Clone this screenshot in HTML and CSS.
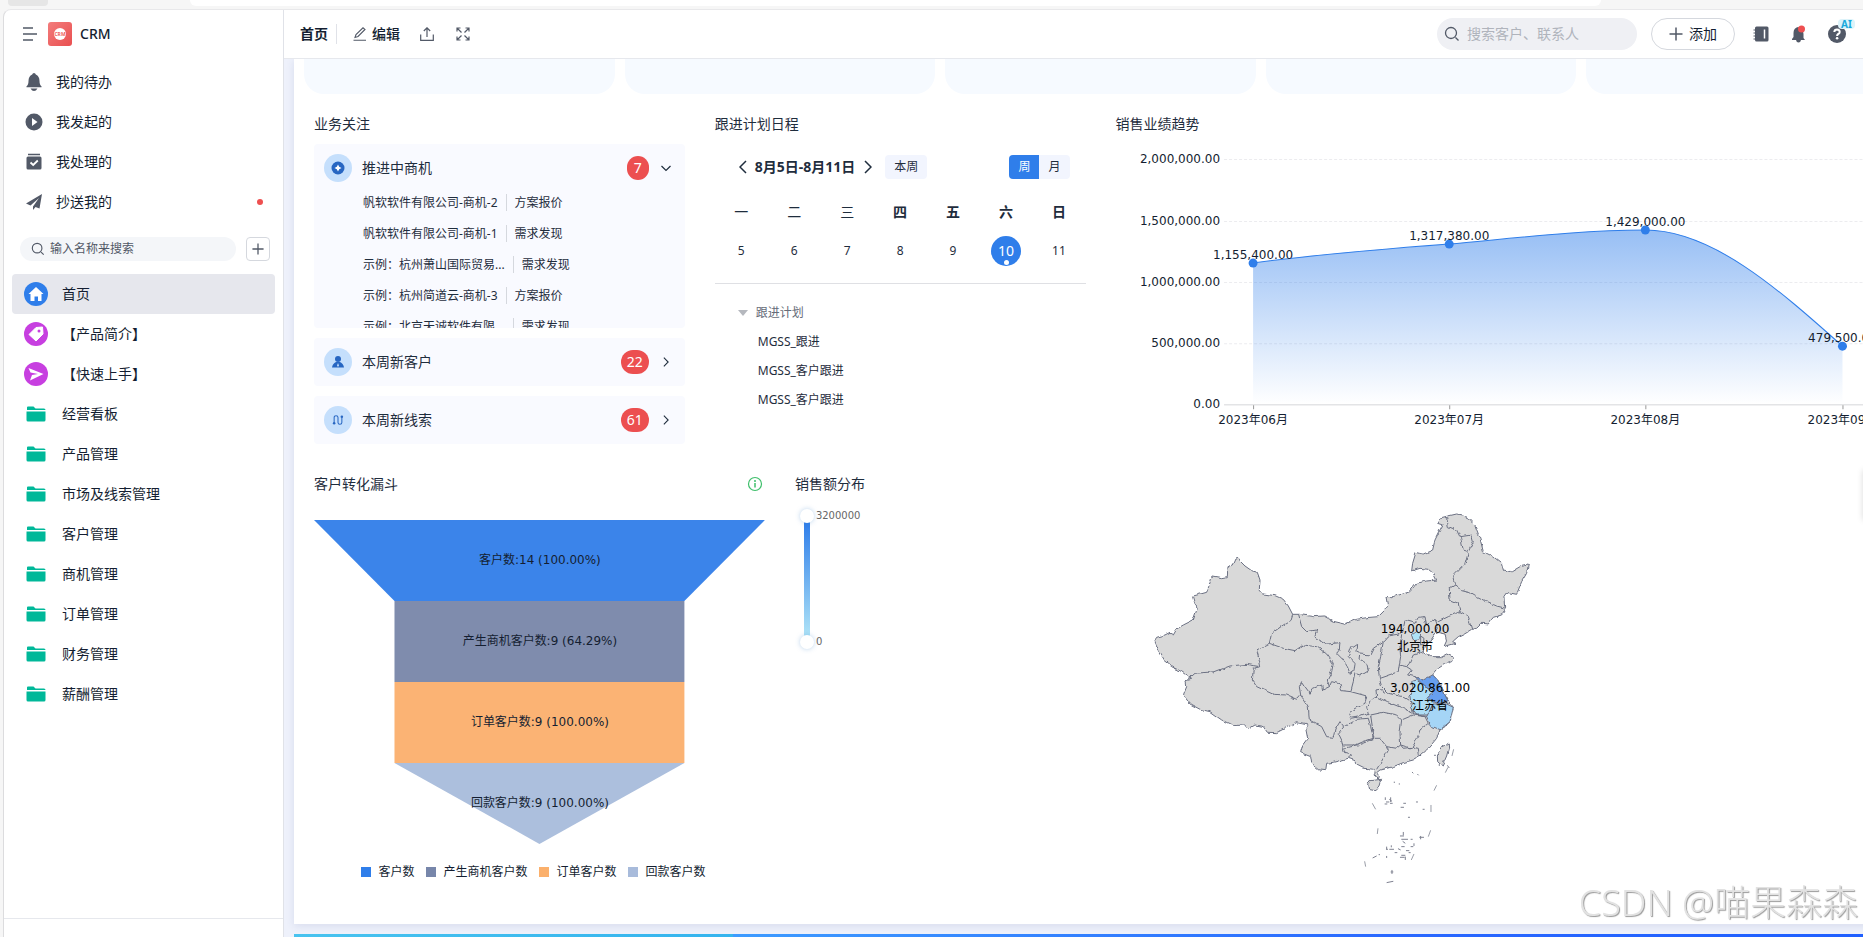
FILE: index.html
```html
<!DOCTYPE html>
<html lang="zh-CN">
<head>
  <meta charset="UTF-8" />
  <title>CRM</title>
  <meta name="viewport" content="width=device-width, initial-scale=1.0" />
  <link rel="stylesheet" href="styles.css">
</head>
<body>

  <!-- icons used more than once -->
  <svg class="sprite" aria-hidden="true">
    <symbol id="folder" viewBox="0 0 20 16">
      <path d="M1 4V1.500Q1 .5 2 .5H7.500L9.500 2.500H18Q19.500 2.500 19.500 4Z" fill="#00b899"/>
      <path d="M.5 5.500H19.500V14Q19.500 15.500 18 15.500H2Q.5 15.500 .5 14Z" fill="#00b899"/>
    </symbol>
    <symbol id="search" viewBox="0 0 16 16">
      <path d="M7 1.500a5.500 5.500 0 1 0 0 11a5.500 5.500 0 1 0 0-11M11.500 11.500l3 3" fill="none" stroke="#525967" stroke-width="1.300"/>
    </symbol>
    <symbol id="plus" viewBox="0 0 14 14">
      <path d="M7 .5v13M.5 7h13" stroke="#525967" stroke-width="1.500"/>
    </symbol>
    <symbol id="right" viewBox="0 0 8 14">
      <path d="M1 1l6 6l-6 6" fill="none" stroke="#1f2d3d" stroke-width="1.500"/>
    </symbol>
  </svg>

  <div class="browser-bar"><span class="tab"></span><span class="address"></span></div>

  <div class="app">
    <aside class="sidebar">
      <div class="brand">
        <button class="icon-btn" aria-label="收起菜单">
          <svg width="14" height="14" viewBox="0 0 14 14"><path d="M0 1h10M0 7h14M0 13h10" stroke="#525967" stroke-width="1.500"/></svg>
        </button>
        <span class="logo">
          <svg width="24" height="24" viewBox="0 0 24 24"><circle cx="12" cy="12" r="6" fill="#fff"/><text x="12" y="14" class="logo-text">CRM</text></svg>
        </span>
        <span class="brand-name">CRM</span>
      </div>

      <nav class="quick">
        <a href="#">
          <svg width="18" height="18" viewBox="0 0 18 18"><path d="M9 0Q10.500 0 10.800 1.500Q14.500 3 14.500 8Q14.500 12 16.500 13.200V14.200H1.500V13.200Q3.500 12 3.500 8Q3.500 3 7.200 1.500Q7.500 0 9 0ZM5.500 15.500H12.500Q11 18 9 18Q7 18 5.500 15.500Z" fill="#525967"/></svg>
          我的待办
        </a>
        <a href="#">
          <svg width="18" height="18" viewBox="0 0 18 18"><circle cx="9" cy="9" r="8.500" fill="#525967"/><path d="M7 5L12.500 9L7 13Z" fill="#fff"/></svg>
          我发起的
        </a>
        <a href="#">
          <svg width="18" height="18" viewBox="0 0 18 18"><path d="M3 1.500H15" stroke="#525967" stroke-width="1.500"/><rect x="1.500" y="3.500" width="15" height="13" rx="1.500" fill="#525967"/><path d="M5.500 9.500L8.200 12L12.800 7.500" fill="none" stroke="#fff" stroke-width="1.800"/></svg>
          我处理的
        </a>
        <a href="#">
          <svg width="18" height="18" viewBox="0 0 18 18"><path d="M17 1L1 10.500L5.500 12.500L14 5L8 13.500V17L10.500 14L14.500 15.500Z" fill="#525967"/></svg>
          抄送我的
          <span class="dot"></span>
        </a>
      </nav>

      <div class="menu-search">
        <label class="pill">
          <svg width="14" height="14"><use href="#search"/></svg>
          <input type="text" placeholder="输入名称来搜索" aria-label="输入名称来搜索" />
        </label>
        <button class="add-menu" aria-label="新建"><svg width="12" height="12"><use href="#plus"/></svg></button>
      </div>

      <nav class="menu">
        <a href="#" class="active">
          <svg width="24" height="24" viewBox="0 0 24 24"><circle cx="12" cy="12" r="12" fill="#2f7eea"/><path d="M12 5L19.500 12H17.500V19H14V14.500H10.500V19H6.500V12H4.500Z" fill="#fff"/></svg>
          首页
        </a>
        <a href="#">
          <svg width="24" height="24" viewBox="0 0 24 24"><circle cx="12" cy="12" r="12" fill="#c73fe0"/><path d="M5 12.500L12 5.500L18.500 5L19 12L12 19Z" fill="#fff" stroke="#fff" stroke-linejoin="round"/><circle cx="15" cy="9" r="1.500" fill="#c73fe0"/></svg>
          【产品简介】
        </a>
        <a href="#">
          <svg width="24" height="24" viewBox="0 0 24 24"><circle cx="12" cy="12" r="12" fill="#c73fe0"/><path d="M4.500 6L19.500 12L6 18.500L8 13L14 12L6.500 10.500Z" fill="#fff"/></svg>
          【快速上手】
        </a>
        <a href="#"><svg width="24" height="16"><use href="#folder"/></svg>经营看板</a>
        <a href="#"><svg width="24" height="16"><use href="#folder"/></svg>产品管理</a>
        <a href="#"><svg width="24" height="16"><use href="#folder"/></svg>市场及线索管理</a>
        <a href="#"><svg width="24" height="16"><use href="#folder"/></svg>客户管理</a>
        <a href="#"><svg width="24" height="16"><use href="#folder"/></svg>商机管理</a>
        <a href="#"><svg width="24" height="16"><use href="#folder"/></svg>订单管理</a>
        <a href="#"><svg width="24" height="16"><use href="#folder"/></svg>财务管理</a>
        <a href="#"><svg width="24" height="16"><use href="#folder"/></svg>薪酬管理</a>
      </nav>
      <div class="sidebar-foot"></div>
    </aside>

    <div class="page">
      <header class="topbar">
        <h1>首页</h1>
        <button class="tool edit">
          <svg width="14" height="14" viewBox="0 0 14 14"><path d="M2 10.500L3 7.500L10 .8L12 2.500L5 9.500ZM.5 13.300H13" fill="none" stroke="#525967" stroke-width="1.100"/></svg>
          编辑
        </button>
        <button class="tool" aria-label="分享">
          <svg width="14" height="14" viewBox="0 0 14 14"><path d="M.7 7.500V13.300H13.300V7.500M7 10V1M3.800 4L7 .8L10.200 4" fill="none" stroke="#525967" stroke-width="1.200"/></svg>
        </button>
        <button class="tool" aria-label="全屏">
          <svg width="14" height="14" viewBox="0 0 14 14"><path d="M1 4.500V1H4.500M1 1L5.500 5.500M9.500 1H13V4.500M13 1L8.500 5.500M1 9.500V13H4.500M1 13L5.500 8.500M13 9.500V13H9.500M13 13L8.500 8.500" fill="none" stroke="#525967" stroke-width="1.200"/></svg>
        </button>

        <label class="global-search">
          <svg width="16" height="16"><use href="#search"/></svg>
          <input type="text" placeholder="搜索客户、联系人" aria-label="搜索客户、联系人" />
        </label>
        <button class="add-btn"><svg width="14" height="14"><use href="#plus"/></svg>添加</button>
        <button class="icon-btn" aria-label="通讯录">
          <svg width="18" height="18" viewBox="0 0 18 18"><rect x="3" y="1.500" width="13.500" height="15" rx="1.500" fill="#525967"/><path d="M12.500 4.500V13.500" stroke="#fff" stroke-width="1.500"/><path d="M1.500 5H4M1.500 8H4M1.500 11H4M1.500 14H4" stroke="#525967"/></svg>
        </button>
        <button class="icon-btn" aria-label="消息">
          <svg width="18" height="18" viewBox="0 0 18 18"><path d="M8 2Q13.500 3 13.500 9V13L15 15H2V14L3.500 12V8Q3.500 3 8 2ZM6 15H11Q10.500 17.500 8.500 17.500Q6.500 17.500 6 15Z" fill="#525967"/><circle cx="11.500" cy="4" r="3.500" fill="#ee4f50"/></svg>
        </button>
        <button class="icon-btn help" aria-label="帮助">
          <svg width="18" height="18" viewBox="0 0 18 18"><circle cx="9" cy="9" r="9" fill="#525967"/><path d="M6.300 7Q6.500 4.500 9 4.500Q11.700 4.600 11.700 6.900Q11.700 8.200 10.200 9Q9.100 9.600 9.100 11" fill="none" stroke="#fff" stroke-width="2"/><circle cx="9.100" cy="13.300" r="1.300" fill="#fff"/></svg>
          <span class="ai">AI</span>
        </button>
      </header>

      <main class="content">
        <div class="board">
          <div class="cards">
            <div class="card"></div><div class="card"></div><div class="card"></div><div class="card"></div><div class="card"></div>
          </div>

          <div class="row first">
            <section class="widget">
              <h2>业务关注</h2>
              <div class="focus open">
                <div class="focus-head">
                  <span class="focus-icon"><svg width="14" height="14" viewBox="0 0 14 14"><circle cx="7" cy="7" r="6.500" fill="#2766c2"/><path d="M7 3.500L8.200 5.800L10.500 7L8.200 8.200L7 10.500L5.800 8.200L3.500 7L5.800 5.800Z" fill="#fff"/></svg></span>
                  <span class="focus-name">推进中商机</span>
                  <span class="badge">7</span>
                  <svg width="12" height="12" viewBox="0 0 12 12"><path d="M1.500 4L6 8.500L10.500 4" fill="none" stroke="#1f2d3d" stroke-width="1.200"/></svg>
                </div>
                <ul>
                  <li><span class="name">帆软软件有限公司-商机-2</span><span class="stage">方案报价</span></li>
                  <li><span class="name">帆软软件有限公司-商机-1</span><span class="stage">需求发现</span></li>
                  <li><span class="name">示例：杭州萧山国际贸易...</span><span class="stage">需求发现</span></li>
                  <li><span class="name">示例：杭州简道云-商机-3</span><span class="stage">方案报价</span></li>
                  <li><span class="name">示例：北京天诚软件有限...</span><span class="stage">需求发现</span></li>
                </ul>
              </div>
              <div class="focus">
                <div class="focus-head">
                  <span class="focus-icon"><svg width="14" height="14" viewBox="0 0 14 14"><circle cx="7" cy="4" r="3" fill="#2766c2"/><path d="M1 12.500Q1.500 8.500 5 7H9Q12.500 8.500 13 12.500Z" fill="#2766c2"/><path d="M7 8L8 10.500L7 12L6 10.500Z" fill="#c5dffc"/></svg></span>
                  <span class="focus-name">本周新客户</span>
                  <span class="badge">22</span>
                  <svg width="12" height="10"><use href="#right"/></svg>
                </div>
              </div>
              <div class="focus">
                <div class="focus-head">
                  <span class="focus-icon"><svg width="12" height="12" viewBox="0 0 14 14"><path d="M2.500 10V4Q2.500 2 4.700 2Q7 2 7 4V10Q7 12 9.200 12Q11.500 12 11.500 10V4" fill="none" stroke="#2766c2" stroke-width="1.200"/><circle cx="2.500" cy="10.800" r="1.500" fill="#2766c2"/><circle cx="11.500" cy="3.200" r="1.500" fill="#2766c2"/></svg></span>
                  <span class="focus-name">本周新线索</span>
                  <span class="badge">61</span>
                  <svg width="12" height="10"><use href="#right"/></svg>
                </div>
              </div>
            </section>

            <section class="widget">
              <h2>跟进计划日程</h2>
              <div class="cal-bar">
                <button class="arrow" aria-label="上一周"><svg width="8" height="14" viewBox="0 0 8 14"><path d="M7 1l-6 6l6 6" fill="none" stroke="#1f2d3d" stroke-width="1.500"/></svg></button>
                <strong>8月5日-8月11日</strong>
                <button class="arrow" aria-label="下一周"><svg width="8" height="14"><use href="#right"/></svg></button>
                <button class="this-week">本周</button>
                <div class="switch"><button class="on">周</button><button>月</button></div>
              </div>
              <table class="cal">
                <thead>
                  <tr><th class="thin">一</th><th class="thin">二</th><th class="thin">三</th><th>四</th><th>五</th><th>六</th><th>日</th></tr>
                </thead>
                <tbody>
                  <tr><td>5</td><td>6</td><td>7</td><td>8</td><td>9</td><td><span class="today">10</span></td><td>11</td></tr>
                </tbody>
              </table>
              <div class="plan">
                <div class="plan-head"><span class="caret"></span>跟进计划</div>
                <ul>
                  <li>MGSS_跟进</li>
                  <li>MGSS_客户跟进</li>
                  <li>MGSS_客户跟进</li>
                </ul>
              </div>
            </section>

            <section class="widget">
              <h2>销售业绩趋势</h2>
              <svg class="trend" viewBox="0 0 771 290">
                <defs>
                  <linearGradient id="area" x1="0" y1="0" x2="0" y2="1">
                    <stop offset="0" stop-color="#2f7eea" stop-opacity=".5"/>
                    <stop offset="1" stop-color="#2f7eea" stop-opacity="0"/>
                  </linearGradient>
                </defs>
                <path class="grid" d="M108 15.500H771M108 77.500H771M108 138.500H771M108 199.500H771"/>
                <path d="M108 260.500H771" stroke="#e3e4e6" stroke-width="1.500"/>
                <path d="M137.500 261v4M333.500 261v4M529.500 261v4M726.500 261v4" stroke="#999"/>
                <path d="M137 119C202 110 268 105 333 100C399 94 464 86 529 86C595 86 661 144 726 202V260H137Z" fill="url(#area)"/>
                <path d="M137 119C202 110 268 105 333 100C399 94 464 86 529 86C595 86 661 144 726 202" fill="none" stroke="#2f7eea"/>
                <g fill="#2f7eea">
                  <circle cx="137" cy="119" r="4.500"/><circle cx="333" cy="100" r="4.500"/><circle cx="529" cy="86" r="4.500"/><circle cx="726" cy="202" r="4.500"/>
                </g>
                <g class="y-axis">
                  <text x="104" y="19">2,000,000.00</text>
                  <text x="104" y="81">1,500,000.00</text>
                  <text x="104" y="142">1,000,000.00</text>
                  <text x="104" y="203">500,000.00</text>
                  <text x="104" y="264">0.00</text>
                </g>
                <g class="mid">
                  <text x="137" y="115">1,155,400.00</text>
                  <text x="333" y="96">1,317,380.00</text>
                  <text x="529" y="82">1,429,000.00</text>
                  <text x="726" y="198">479,500.00</text>
                  <text x="137" y="280">2023年06月</text>
                  <text x="333" y="280">2023年07月</text>
                  <text x="529" y="280">2023年08月</text>
                  <text x="726" y="280">2023年09月</text>
                </g>
              </svg>
            </section>
          </div>

          <div class="row second">
            <section class="widget">
              <h2>客户转化漏斗
                <svg class="info" width="16" height="16" viewBox="0 0 16 16"><circle cx="8" cy="8" r="6.500" fill="none" stroke="#3fbf6b" stroke-width="1.200"/><path d="M8 7V11.500" stroke="#3fbf6b" stroke-width="1.500"/><circle cx="8" cy="5" r="1" fill="#3fbf6b"/></svg>
              </h2>
              <svg class="funnel" viewBox="0 0 451 324">
                <path d="M0 0H451L370.500 81H80.500Z" fill="#3b84ea"/>
                <path d="M80.500 81H370.500V162H80.500Z" fill="#7f8cad"/>
                <path d="M80.500 162H370.500V243H80.500Z" fill="#fbb374"/>
                <path d="M80.500 243H370.500L225.500 324Z" fill="#acbfdd"/>
                <g class="mid">
                  <text x="226" y="44">客户数:14 (100.00%)</text>
                  <text x="226" y="125">产生商机客户数:9 (64.29%)</text>
                  <text x="226" y="206">订单客户数:9 (100.00%)</text>
                  <text x="226" y="287">回款客户数:9 (100.00%)</text>
                </g>
              </svg>
              <ul class="legend">
                <li class="blue">客户数</li>
                <li class="slate">产生商机客户数</li>
                <li class="orange">订单客户数</li>
                <li class="pale">回款客户数</li>
              </ul>
            </section>

            <section class="widget">
              <h2>销售额分布</h2>
              <div class="map-area">
                <div class="range">
                  <div class="range-bar">
                    <input type="range" min="0" max="3200000" value="3200000" aria-label="最大值" />
                    <input type="range" min="0" max="3200000" value="0" aria-label="最小值" />
                  </div>
                  <div class="range-text"><span>3200000</span><span>0</span></div>
                </div>
                <svg class="map" width="400" height="400" viewBox="1 4 400 400">
                  <defs>
                    <filter id="coast" x="-5%" y="-5%" width="110%" height="110%" color-interpolation-filters="sRGB">
                      <feTurbulence type="fractalNoise" baseFrequency=".16" numOctaves="2" seed="4"/>
                      <feDisplacementMap in="SourceGraphic" scale="4" xChannelSelector="R" yChannelSelector="G"/>
                    </filter>
                  </defs>
                  <g filter="url(#coast)">
                    <g class="land" transform="scale(.3333)">
                      <path d="M42 425L50 412L75 405L90 397L100 402L108 388L130 375L160 360L165 345L172 325L165 305L160 288L200 277L208 255L216 228L245 233L262 230L264 200L280 195L288 177L296 175L302 185L315 198L335 212L352 217L360 240L358 268L370 282L405 287L430 298L445 318L458 343L475 343L520 350L552 348L580 364L615 372L650 358L680 353L715 350L735 330L743 318L738 290L760 290L780 285L810 275L830 250L860 243L890 240L880 220L865 208L840 205L815 213L818 190L828 157L850 162L878 150L885 120L900 90L908 75L893 70L900 57L920 52L950 45L985 52L1005 75L1020 115L1030 155L1060 170L1085 190L1090 210L1115 215L1140 200L1165 195L1160 220L1145 245L1130 283L1105 278L1095 292L1097 325L1085 345L1060 352L1045 372L1025 370L1010 385L995 388L975 400L955 410L938 425L948 430L912 440L920 422L915 402L895 398L885 402L870 425L852 440L850 455L875 470L905 470L920 462L940 472L935 485L915 492L895 505L878 525L893 540L905 560L915 585L925 602L940 622L930 640L930 665L915 680L900 690L890 715L882 725L860 750L840 768L820 780L790 788L760 800L720 810L710 818L718 830L715 838L707 830L703 808L670 805L650 795L645 782L625 775L580 787L560 790L557 812L540 810L515 790L512 770L482 758L488 735L503 715L498 690L505 675L470 668L445 680L410 698L382 697L370 680L345 675L325 688L315 675L280 677L245 660L210 635L180 628L150 612L130 585L140 560L138 542L155 538L125 515L95 500L70 480L55 455Z"/>
                      <path d="M925 732L905 742L892 768L893 785L907 798L914 782L920 768L926 745Z"/>
                      <path d="M683 855L690 842L725 838L720 855L705 872L685 868Z"/>
                      <g class="inner">
                        <path d="M145 538L165 520L225 515L270 498L320 493L362 500L358 480L350 450L388 430L395 400L430 375L452 362L458 343"/>
                        <path d="M362 500L340 505L337 540L350 560L400 583L440 585L470 598L482 585L478 560L485 545L495 560L510 580L520 565L545 555L548 570L568 560L562 540L575 515L580 490L560 462L530 440L490 435L465 452L430 445L388 430"/>
                        <path d="M475 343L485 380L500 395L530 390L525 410L560 432L600 428L598 450L590 460L610 480L622 500L630 520L642 512L645 490L625 470L635 440L650 430L648 455L662 462L690 465L700 445L730 425L745 408L775 403L788 395L795 362L825 370L835 352L855 350L860 375L885 355L895 365L925 350L960 335L955 310L930 300L928 265L945 255L938 228L960 205L975 190L985 155L970 150L962 115L950 90L925 80L920 52"/>
                        <path d="M962 110L995 105L1000 125L985 155"/>
                        <path d="M945 255L965 272L990 278L1010 290L1040 305L1070 318L1097 325M960 335L980 345L990 370L995 388"/>
                        <path d="M662 462L660 480L680 490L685 510L660 525L645 520L640 545L632 575L605 572L600 552L575 545L568 560M632 575L680 588L675 610L640 630L625 640L632 655L660 650L685 640L680 620L695 600L710 590L708 570L718 568L735 580"/>
                        <path d="M730 425L722 470L715 500L718 535L725 560L745 580L790 590L815 605M718 535L775 515L778 495L782 470L780 440L785 403M778 495L800 500L808 490L820 465L850 455M800 500L815 510L803 525L825 530"/>
                        <path d="M885 402L895 385L885 355M708 590L740 605L790 625L830 645L865 650M815 605L820 640"/>
                        <path d="M482 585L505 620L508 660L545 680L560 710L580 712L585 690L600 665L612 680L650 658L685 655L692 680L700 715L670 725L640 738L610 745L605 720L595 700L612 680"/>
                        <path d="M692 645L730 637L770 645L785 660L780 700L782 735L770 745L740 740L720 715L700 715L697 680Z"/>
                        <path d="M785 660L820 645L855 650L865 670L840 690L830 720L815 745L782 735M610 745L615 760L635 765L625 775M610 735L655 735L700 718M740 740L745 748L730 775L710 808M782 735L790 745L815 742L835 745L838 768"/>
                      </g>
                      <path d="M815 545L830 540L855 560L880 575L863 590L880 605L865 645L830 645L815 620L810 590L820 570Z" fill="#aeddf5"/>
                      <path d="M825 530L850 540L878 525L893 540L905 560L915 585L925 605L895 612L870 600L863 590L880 575L855 560Z" fill="#679ff0"/>
                      <path d="M860 650L880 612L920 612L940 622L930 665L900 690L875 680Z" fill="#a5d5f6"/>
                      <path d="M815 405L830 395L842 402L838 420L820 422Z" fill="#aee3f7"/>
                      <path d="M842 408L852 415L850 432L842 435Z"/>
                    </g>
                  </g>
                  <!-- islands and dashes of the South China Sea -->
                  <g transform="scale(.3333)">
                    <path d="M941 748L936 768M924 802L916 818M890 856L882 872M873 915V936M872 991L865 1010M822 1062L814 1080M712 1002L714 985M674 1084L677 1100M697 910L707 928" stroke="#999da7" stroke-width="3" fill="none"/>
                    <path d="M736 892v8M738 906h10M748 898l8 6M752 892v14M734 912h8M750 910h8M782 922h10M790 910h8M828 906h6M763 845v4M778 850v4M848 928h6M804 952h6M780 1008h12M784 1018h20M790 996v10M788 1024l8 6M812 1018h6M838 1012h14M842 1008v10M740 1040v8M738 1048h6M748 1048h14M754 1036v6M774 1046l8 4M784 1040h10M798 1052h10M812 1040h8M822 1030v8M806 1058h6M764 1058h8M780 1072h14M784 1066h12M796 1070v10M740 1068v6M716 1064h4M698 1074l12 -6M756 1110v12M752 1116h8M740 1148l20 -4M816 816l4 4M832 822l4 4M882 766h6M898 792v6M922 796l6 8" stroke="#7d8190" stroke-width="3" fill="none"/>
                  </g>
                  <g class="mid map-text">
                    <text x="275" y="133">194,000.00</text>
                    <text x="275" y="151">北京市</text>
                    <text x="290" y="192">3,020,861.00</text>
                    <text x="290" y="210">江苏省</text>
                  </g>
                </svg>
              </div>
            </section>
          </div>
        </div>
        <div class="next-banner"></div>
      </main>
    </div>
  </div>

  <div class="side-tab"></div>
  <div class="watermark">CSDN @喵果森森</div>

</body>
</html>
```

FILE: styles.css
```css
* {
  box-sizing: border-box;
}

body {
  margin: 0;
  height: 100vh;
  display: flex;
  flex-direction: column;
  overflow: hidden;
  background: #f6f6f6;
  color: #1f2d3d;
  font-family: "Noto Sans", "Noto Sans CJK SC", sans-serif;
  font-size: 14px;
  line-height: 20px;
}

h1, h2, ul {
  margin: 0;
  padding: 0;
}

h1, h2 {
  font-weight: 400;
  font-size: 14px;
}

ul {
  list-style: none;
}

a {
  color: inherit;
  text-decoration: none;
}

button, input {
  margin: 0;
  padding: 0;
  border: none;
  background: none;
  color: inherit;
  font: inherit;
}

button {
  display: flex;
  align-items: center;
  justify-content: center;
  cursor: pointer;
}

input {
  outline: none;
  min-width: 0;
}

svg {
  flex: none;
}

.sprite {
  position: absolute;
  width: 0;
  height: 0;
}

/* strip above the page */
.browser-bar {
  display: flex;
  flex: none;
  height: 9px;
  padding: 0 262px 3px 8px;
  gap: 142px;
}

.tab {
  width: 40px;
  background: #e6e6e6;
  border-radius: 0 0 4px 4px;
}

.address {
  flex: 1;
  background: #fff;
  border-radius: 0 0 12px 12px;
}

.app {
  flex: 1;
  min-height: 0;
  display: flex;
  margin-left: 3px;
  border-top: 1px solid #e8e8ea;
  border-left: 1px solid #dcdcde;
  border-top-left-radius: 8px;
  background: #fff;
  overflow: hidden;
}

/* sidebar */
.sidebar {
  width: 280px;
  flex: none;
  display: flex;
  flex-direction: column;
  border-right: 1px solid #e0e2e8;
  color: #141e31;
}

.brand {
  display: flex;
  align-items: center;
  height: 48px;
  padding-left: 19px;
  margin-bottom: 4px;
}

.brand .icon-btn {
  margin-right: 11px;
}

.logo {
  height: 24px;
  border-radius: 3px;
  background: linear-gradient(135deg, #f37d7c, #e94f50);
}

.logo-text {
  font-size: 5px;
  font-weight: 700;
  fill: #ee5f5f;
  text-anchor: middle;
}

.brand-name {
  margin-left: 8px;
  font-weight: 500;
}

.quick a {
  display: flex;
  align-items: center;
  height: 40px;
  padding: 0 20px 0 21px;
  gap: 13px;
}

.dot {
  width: 6px;
  height: 6px;
  margin-left: auto;
  border-radius: 50%;
  background: #ee4f50;
}

.menu-search {
  display: flex;
  gap: 10px;
  padding: 15px 13px 13px 16px;
}

.pill {
  flex: 1;
  display: flex;
  align-items: center;
  gap: 5px;
  height: 24px;
  padding: 0 11px;
  border-radius: 12px;
  background: #f4f6f9;
  font-size: 12px;
}

.pill input::placeholder {
  color: #525967;
}

.add-menu {
  width: 24px;
  height: 24px;
  border: 1px solid #d5d8de;
  border-radius: 4px;
}

.menu {
  padding: 0 8px;
}

.menu a {
  display: flex;
  align-items: center;
  gap: 14px;
  height: 40px;
  padding-left: 12px;
  border-radius: 4px;
}

.menu .active {
  background: #e6e7ed;
}

.sidebar-foot {
  height: 19px;
  margin-top: auto;
  border-top: 1px solid #e6e8ed;
}

/* header */
.page {
  flex: 1;
  min-width: 0;
  display: flex;
  flex-direction: column;
}

.topbar {
  display: flex;
  flex: none;
  align-items: center;
  height: 49px;
  padding: 0 17px 0 16px;
  border-bottom: 1px solid #e6e8ed;
  color: #141e31;
}

.topbar h1 {
  padding-right: 8px;
  margin-right: 16px;
  border-right: 1px solid #e0e2e8;
  font-weight: 700;
}

.tool {
  width: 14px;
  margin-right: 22px;
}

.tool.edit {
  width: auto;
  gap: 5px;
  margin-right: 20px;
  font-weight: 500;
}

.global-search {
  display: flex;
  align-items: center;
  gap: 7px;
  width: 200px;
  height: 32px;
  padding: 0 7px;
  margin-left: auto;
  border-radius: 16px;
  background: #eff0f4;
}

.global-search input::placeholder {
  color: #b0b4bc;
}

.add-btn {
  gap: 6px;
  width: 84px;
  height: 32px;
  margin: 0 17px 0 14px;
  border: 1px solid #d5d8de;
  border-radius: 16px;
}

.topbar .icon-btn {
  margin-left: 20px;
}

.topbar .add-btn + .icon-btn {
  margin-left: 0;
}

.help {
  position: relative;
}

.ai {
  position: absolute;
  left: 10px;
  top: -6px;
  padding: 0 3px;
  border-radius: 4px;
  background: #dcf3fa;
  color: #18a8dc;
  font-size: 10px;
  font-weight: 700;
  line-height: 10px;
}

/* dashboard */
.content {
  flex: 1;
  min-height: 0;
  padding-left: 10px;
  overflow: hidden;
  background: #eef1fb;
}

.board {
  margin-right: -44px;
  padding: 0 5px 5px;
  background: #fff;
  box-shadow: 0 2px 8px rgba(60, 70, 140, .12);
}

.cards {
  display: flex;
  gap: 10px;
  padding: 0 5px 5px;
}

.card {
  flex: 1;
  height: 35px;
  border-radius: 0 0 20px 20px;
  background: #f6faff;
}

.row {
  display: grid;
}

.row.first {
  grid-template-columns: 1fr 1fr 2fr;
  height: 360px;
}

.row.second {
  grid-template-columns: 3fr 7fr;
  height: 460px;
}

.widget {
  min-width: 0;
  padding: 10px 15px;
}

.widget h2 {
  display: flex;
  align-items: center;
  justify-content: space-between;
  height: 30px;
  margin-bottom: 5px;
}

.info {
  margin-right: 2px;
}

.focus {
  height: 48px;
  margin-bottom: 10px;
  padding: 10px 13px 0 10px;
  border-radius: 4px;
  background: #f9faff;
  overflow: hidden;
}

.focus.open {
  height: 184px;
}

.focus-head {
  display: flex;
  align-items: center;
  height: 28px;
}

.focus-icon {
  display: flex;
  align-items: center;
  justify-content: center;
  width: 28px;
  height: 28px;
  border-radius: 50%;
  background: #c5dffc;
}

.focus-name {
  flex: 1;
  margin-left: 10px;
}

.badge {
  min-width: 22px;
  height: 24px;
  padding: 0 6px;
  margin-right: 11px;
  border-radius: 12px;
  background: #ec4f50;
  color: #fff;
  line-height: 24px;
  text-align: center;
}

.focus ul {
  padding: 5px 0 0 39px;
}

.focus li {
  display: flex;
  align-items: center;
  height: 31px;
  font-size: 12px;
}

.name {
  white-space: nowrap;
}

.stage {
  margin-left: 8px;
  padding-left: 8px;
  border-left: 1px solid #d5d8de;
  line-height: 17px;
}

/* calendar */
.cal-bar {
  display: flex;
  align-items: center;
  height: 45px;
  padding: 0 16px 0 24px;
}

.cal-bar strong {
  margin: 0 9px 0 8px;
}

.this-week, .switch button {
  height: 24px;
  padding: 0 9px;
  background: #f2f5fe;
  font-size: 12px;
}

.this-week {
  margin-left: 13px;
  border-radius: 4px;
}

.switch {
  display: flex;
  margin-left: auto;
  border-radius: 4px;
  overflow: hidden;
}

.switch .on {
  background: #2f7eea;
  color: #fff;
}

.cal {
  width: 100%;
  table-layout: fixed;
  border-collapse: collapse;
}

.cal th {
  height: 46px;
  padding: 0;
}

.cal .thin {
  font-weight: 400;
}

.cal td {
  height: 32px;
  padding: 0;
  font-size: 12px;
  text-align: center;
}

.today {
  position: relative;
  display: block;
  width: 30px;
  height: 30px;
  margin: 0 auto;
  border-radius: 50%;
  background: #2f7eea;
  color: #fff;
  font-size: 14px;
  line-height: 30px;
}

.today::after {
  content: "";
  position: absolute;
  left: 13px;
  bottom: 1px;
  width: 5px;
  height: 5px;
  border-radius: 50%;
  background: #fff;
}

.plan {
  margin-top: 16px;
  padding: 15px 23px;
  border-top: 1px solid #dfe0e4;
  font-size: 12px;
}

.plan-head {
  display: flex;
  align-items: center;
  gap: 8px;
  height: 28px;
  color: #666c78;
}

.caret {
  border: 5px solid transparent;
  border-top: 6px solid #b5b8be;
  border-bottom: 0;
}

.plan li {
  height: 29px;
  padding-left: 20px;
  line-height: 29px;
}

/* charts */
.trend, .funnel {
  display: block;
  width: 100%;
}

.trend text, .funnel text, .map text {
  font-family: "DejaVu Sans", "Noto Sans CJK SC", sans-serif;
  font-size: 12px;
  fill: #141e31;
}

.grid {
  stroke: #ececef;
  stroke-dasharray: 3 2;
}

.y-axis {
  text-anchor: end;
}

.mid {
  text-anchor: middle;
}

.funnel {
  margin-top: 21px;
}

.legend {
  display: flex;
  justify-content: center;
  gap: 12px;
  margin: 18px 12px 0 0;
  font-size: 12px;
  color: #141e31;
}

.legend li {
  display: flex;
  align-items: center;
  gap: 7px;
}

.legend li::before {
  content: "";
  width: 10px;
  height: 10px;
  background: #2f7eea;
}

.legend .slate::before {
  background: #7786aa;
}

.legend .orange::before {
  background: #fbb06c;
}

.legend .pale::before {
  background: #a8bbdb;
}

.map-area {
  display: grid;
  grid-template-columns: 1fr auto 1fr;
}

.range {
  display: flex;
  gap: 6px;
  height: 140px;
  margin: 5px 0 0 9px;
}

.range-bar {
  position: relative;
  width: 6px;
  height: 114px;
  margin-top: 13px;
  background: linear-gradient(#2f7eea, #aee3f7);
}

.range-bar input {
  position: absolute;
  left: -6px;
  top: -13px;
  width: 18px;
  height: 140px;
  writing-mode: vertical-lr;
  direction: rtl;
  appearance: none;
  pointer-events: none;
}

.range-bar input::-webkit-slider-thumb {
  appearance: none;
  width: 14px;
  height: 14px;
  border-radius: 50%;
  background: #fff;
  box-shadow: 0 0 5px rgba(60, 130, 200, .35);
  pointer-events: auto;
}

.range-text {
  display: flex;
  flex-direction: column;
  justify-content: space-between;
  color: #666;
  font-family: "DejaVu Sans", sans-serif;
  font-size: 10px;
  line-height: 14px;
}

.land path {
  stroke: #6a6f82;
  stroke-width: 3;
  stroke-linejoin: round;
}

.land {
  fill: #d9d9d9;
}

.land .inner {
  fill: none;
}

.map .map-text text {
  fill: #000;
}

.next-banner {
  height: 40px;
  margin-top: 10px;
  background: linear-gradient(90deg, #48c3ef, #35b4ee 28%, #3d9bff 28%, #2a68ff 70%, #1f5fff);
}

.side-tab {
  position: fixed;
  right: -20px;
  top: 470px;
  width: 20px;
  height: 50px;
  box-shadow: 0 0 6px rgba(0, 0, 0, .15);
}

.watermark {
  position: fixed;
  right: 5px;
  bottom: 12px;
  color: #e2e2e2;
  font-size: 36px;
  font-weight: 300;
  line-height: 44px;
  text-shadow: 1px 1px 1px #999;
}
```
